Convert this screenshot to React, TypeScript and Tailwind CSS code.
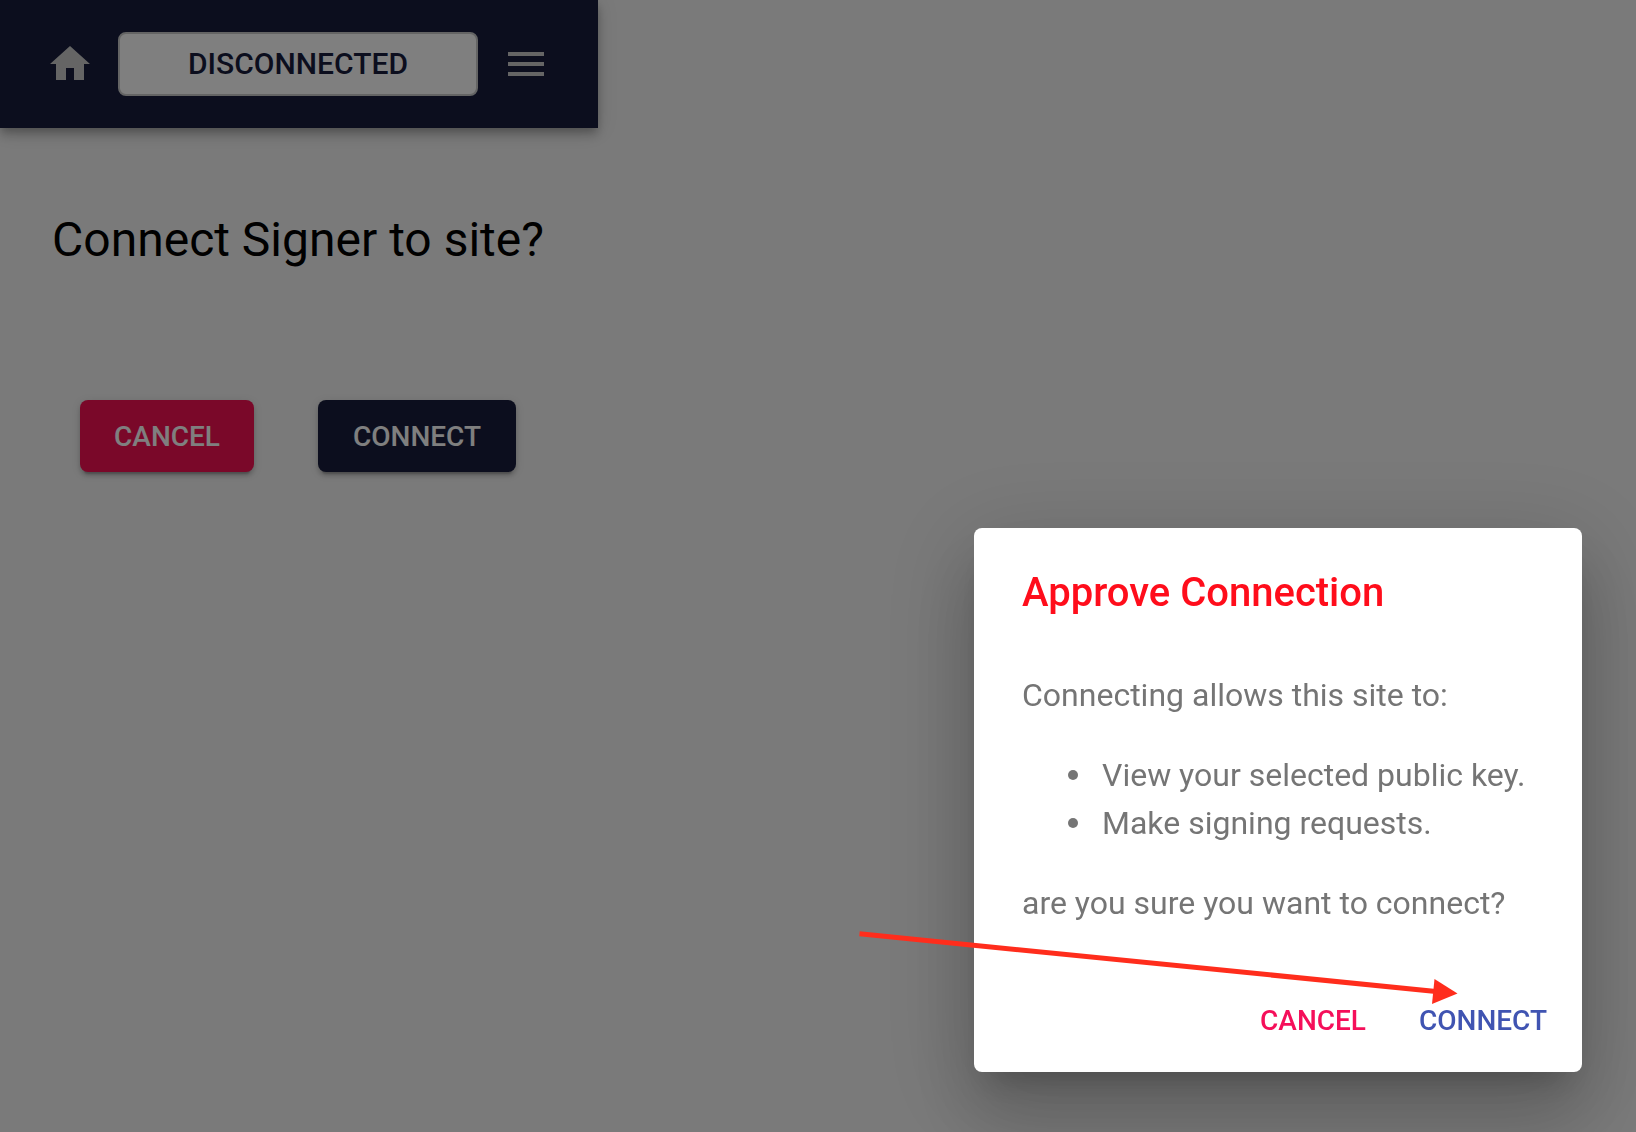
import React, { useState } from "react";
import { MdHome, MdMenu } from "react-icons/md";

const PERMISSIONS = ["View your selected public key.", "Make signing requests."];

function Header() {
  return (
    <header className="flex h-32 items-center gap-6 bg-[#181d3d] pl-[46px] shadow-[0_4px_8px_-2px_rgba(0,0,0,0.2),0_8px_10px_rgba(0,0,0,0.14),0_2px_20px_rgba(0,0,0,0.12)]">
      <a href="#home" aria-label="Home" className="text-[#cacaca]">
        <MdHome size={48} />
      </a>
      <button className="h-16 w-[360px] rounded-lg border-2 border-[#c8c8c8] bg-white text-[30px] leading-[56px] font-medium text-[#181d3d]">
        DISCONNECTED
      </button>
      <button aria-label="Menu" className="text-[#cacaca]">
        <MdMenu size={48} />
      </button>
    </header>
  );
}

function ConnectPage({ onConnect }: { onConnect: () => void }) {
  return (
    <main className="flex flex-col items-center pt-20 pr-0.5">
      <h1 className="text-5xl leading-[64px] text-black">
        Connect Signer to site?
      </h1>
      <div className="mt-32 flex gap-16 text-[28px] font-medium text-white">
        <button className="h-[72px] w-[174px] rounded-lg bg-[#f51053] pt-0.5 shadow-[0_6px_2px_-4px_rgba(0,0,0,0.2),0_4px_4px_rgba(0,0,0,0.14),0_2px_10px_rgba(0,0,0,0.12)]">
          CANCEL
        </button>
        <button
          onClick={onConnect}
          className="h-[72px] w-[198px] rounded-lg bg-[#181d3d] pt-0.5 shadow-[0_6px_2px_-4px_rgba(0,0,0,0.2),0_4px_4px_rgba(0,0,0,0.14),0_2px_10px_rgba(0,0,0,0.12)]"
        >
          CONNECT
        </button>
      </div>
    </main>
  );
}

function PointerArrow() {
  return (
    <svg
      className="pointer-events-none absolute top-[402px] -left-[116px]"
      width="602"
      height="76"
      viewBox="0 0 602 76"
      aria-hidden="true"
    >
      <path d="M1.5 3.8L578 61.5" stroke="#ff2d1c" strokeWidth="5" />
      <path d="M576.5 49L599.5 63.5L574 74Z" fill="#ff2d1c" />
    </svg>
  );
}

function ApproveDialog({ onClose }: { onClose: () => void }) {
  return (
    <div className="fixed inset-0 flex items-end justify-end bg-black/50 pr-[54px] pb-[60px]">
      <div
        role="dialog"
        aria-labelledby="approve-title"
        className="relative w-full max-w-[608px] rounded-lg bg-white shadow-[0_22px_30px_-14px_rgba(0,0,0,0.2),0_48px_76px_6px_rgba(0,0,0,0.14),0_18px_92px_16px_rgba(0,0,0,0.12)]"
      >
        <h2
          id="approve-title"
          className="px-12 py-8 text-[40px] leading-[66px] font-medium text-[#ff0d1b]"
        >
          Approve Connection
        </h2>
        <div className="px-12 pt-[13px] pb-[41px] text-[32px] leading-[48px] text-[#757575]">
          <p>Connecting allows this site to:</p>
          <ul className="my-8 pl-[46px]">
            {PERMISSIONS.map((permission) => (
              <li
                key={permission}
                className="flex items-center gap-6 before:size-[10px] before:rounded-full before:bg-[#757575] before:content-['']"
              >
                {permission}
              </li>
            ))}
          </ul>
          <p>are you sure you want to connect?</p>
        </div>
        <div className="flex justify-end gap-4 p-4 text-[28px] font-medium">
          <button
            onClick={onClose}
            className="h-[72px] w-[142px] pt-0.5 text-[#f50f5a]"
          >
            CANCEL
          </button>
          <button
            onClick={onClose}
            className="h-[72px] w-[166px] pt-0.5 text-[#4054b2]"
          >
            CONNECT
          </button>
        </div>
        <PointerArrow />
      </div>
    </div>
  );
}

export default function App() {
  const [open, setOpen] = useState(true);

  return (
    <div className="min-h-screen bg-[#f4f4f4] font-[Roboto,sans-serif]">
      <div className="max-w-[598px]">
        <Header />
        <ConnectPage onConnect={() => setOpen(true)} />
      </div>
      {open && <ApproveDialog onClose={() => setOpen(false)} />}
    </div>
  );
}
